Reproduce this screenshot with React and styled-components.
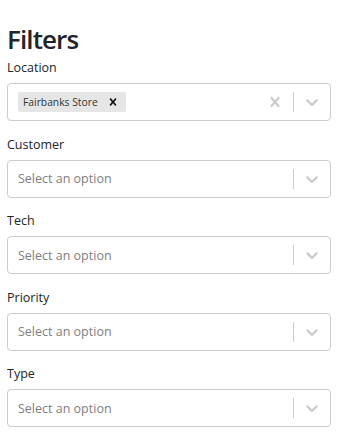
import React from 'react';
import styled, { createGlobalStyle } from 'styled-components';

const GlobalStyle = createGlobalStyle`
  body {
    margin: 0;
    background: #fff;
    font-family: "Open Sans", "Noto Sans", sans-serif;
    color: #212529;
  }
`;

const Panel = styled.div`
  padding: 22px 8px 0 7px;
`;

const Title = styled.h1`
  margin: 0 0 4px;
  font-size: 26px;
  line-height: 34px;
  font-weight: 600;
  letter-spacing: -0.9px;
  color: #212529;
`;

const Field = styled.div`
  margin-bottom: 15.5px;
`;

const Label = styled.label`
  display: block;
  font-size: 12.5px;
  line-height: 16px;
  margin-bottom: 7px;
`;

const Control = styled.div`
  display: flex;
  align-items: center;
  min-height: 36px;
  border: 1px solid #ccc;
  border-radius: 4px;
  background: #fff;
`;

const ValueBox = styled.div`
  flex: 1;
  display: flex;
  flex-wrap: wrap;
  align-items: center;
  padding: 2px 8px;
  min-width: 0;
`;

const Placeholder = styled.span`
  margin: 0 2px;
  color: #808080;
  font-size: 12.5px;
`;

const Chip = styled.div`
  display: flex;
  align-items: center;
  margin: 2px;
  background: #e6e6e6;
  border-radius: 2px;
  height: 20px;
`;

const ChipLabel = styled.span`
  font-size: 10.3px;
  color: #333;
  padding: 3px 4px 3px 5px;
`;

const ChipRemove = styled.span`
  display: flex;
  align-items: center;
  padding: 0 6px 0 4px;
  color: #111;
`;

const Indicators = styled.div`
  display: flex;
  align-items: center;
  align-self: stretch;
`;

const Indicator = styled.div`
  display: flex;
  padding: 8px;
  color: #ccc;
`;

const Separator = styled.span`
  align-self: stretch;
  width: 1px;
  margin: 8px 0;
  background: #ccc;
`;

const Cross = ({ size }) => (
  <svg width={size} height={size} viewBox="0 0 20 20" fill="currentColor">
    <path d="M14.348 14.849c-0.469 0.469-1.229 0.469-1.697 0l-2.651-3.030-2.651 3.029c-0.469 0.469-1.229 0.469-1.697 0-0.469-0.469-0.469-1.229 0-1.697l2.758-3.15-2.759-3.152c-0.469-0.469-0.469-1.228 0-1.697s1.228-0.469 1.697 0l2.652 3.031 2.651-3.031c0.469-0.469 1.228-0.469 1.697 0s0.469 1.229 0 1.697l-2.758 3.152 2.758 3.15c0.469 0.469 0.469 1.229 0 1.698z" />
  </svg>
);

const Chevron = () => (
  <svg width="20" height="20" viewBox="0 0 20 20" fill="currentColor">
    <path d="M4.516 7.548c0.436-0.446 1.043-0.481 1.576 0l3.908 3.747 3.908-3.747c0.533-0.481 1.141-0.446 1.574 0 0.436 0.445 0.408 1.197 0 1.615-0.406 0.418-4.695 4.502-4.695 4.502-0.217 0.223-0.502 0.335-0.787 0.335s-0.57-0.112-0.789-0.335c0 0-4.287-4.084-4.695-4.502s-0.436-1.17 0-1.615z" />
  </svg>
);

const filters = [
  { label: 'Location', values: ['Fairbanks Store'] },
  { label: 'Customer', values: [] },
  { label: 'Tech', values: [] },
  { label: 'Priority', values: [] },
  { label: 'Type', values: [] },
];

function Select({ values }) {
  return (
    <Control>
      <ValueBox>
        {values.length === 0 && <Placeholder>Select an option</Placeholder>}
        {values.map((v) => (
          <Chip key={v}>
            <ChipLabel>{v}</ChipLabel>
            <ChipRemove><Cross size={14} /></ChipRemove>
          </Chip>
        ))}
      </ValueBox>
      <Indicators>
        {values.length > 0 && <Indicator><Cross size={20} /></Indicator>}
        <Separator />
        <Indicator><Chevron /></Indicator>
      </Indicators>
    </Control>
  );
}

export default function App() {
  return (
    <>
      <GlobalStyle />
      <Panel>
        <Title>Filters</Title>
        {filters.map((f) => (
          <Field key={f.label}>
            <Label>{f.label}</Label>
            <Select values={f.values} />
          </Field>
        ))}
      </Panel>
    </>
  );
}
